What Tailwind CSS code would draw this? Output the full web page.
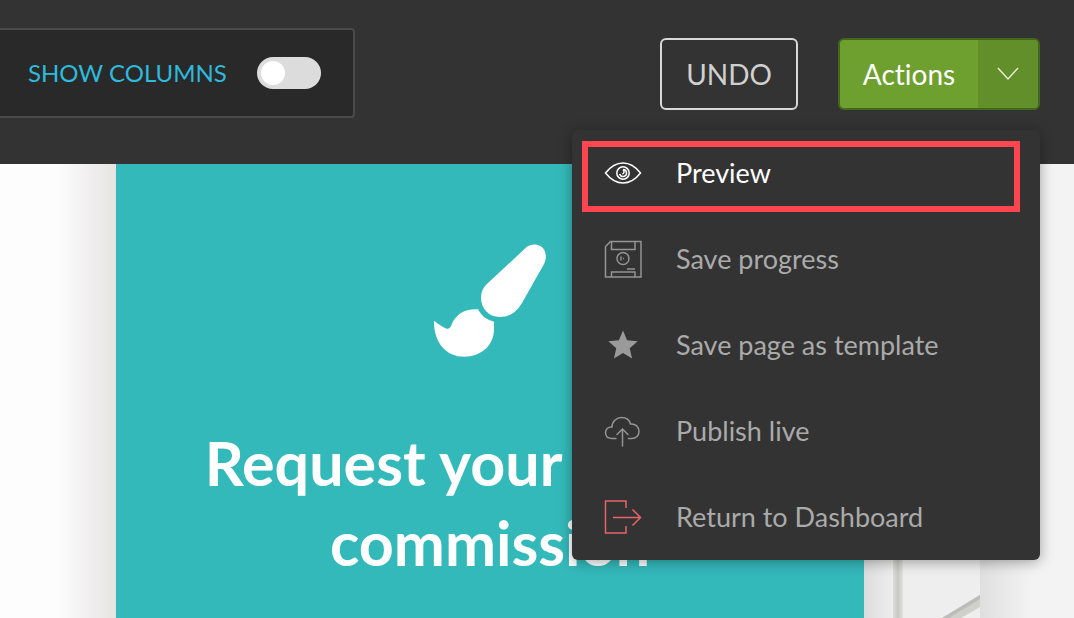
<!DOCTYPE html>
<html lang="en">
<head>
  <meta charset="UTF-8" />
  <meta name="viewport" content="width=device-width, initial-scale=1.0" />
  <title>Page Builder</title>
  <script src="https://cdn.jsdelivr.net/npm/@tailwindcss/browser@4"></script>
</head>
<body class="min-h-screen flex flex-col overflow-hidden bg-[#f3f3f3] font-['Lato','Open_Sans',sans-serif] [font-variant-ligatures:none]">

  <!-- Toolbar -->
  <header class="relative z-10 flex items-start justify-between h-[164px] shrink-0 bg-[#333333] pr-[34px]">
    <div class="mt-7 flex items-center gap-[30px] h-[90px] pl-7 pr-8 bg-[#292929] border-2 border-l-0 border-[#4a4a4a] rounded-r-sm">
      <label for="columns" class="text-2xl text-[#2fb9dc]">SHOW COLUMNS</label>
      <input id="columns" type="checkbox" class="appearance-none w-16 h-8 rounded-full bg-[#dcdcdc] before:block before:size-6 before:m-1 before:rounded-full before:bg-white" />
    </div>

    <div class="relative mt-[38px] flex gap-10">
      <button class="w-[138px] h-[72px] border-2 border-[#d8d8d8] rounded-md text-[28px] text-[#d0d0d0]">UNDO</button>

      <div class="flex w-[202px] h-[72px] border-2 border-[#43681b] rounded-md overflow-hidden bg-[#6ea030] text-white">
        <button class="flex-1 text-[28px]">Actions</button>
        <button aria-label="Open actions menu" aria-expanded="true" class="flex items-center justify-center w-[60px] bg-[#638f2b]">
          <svg width="22" height="14" viewBox="0 0 22 14" fill="none" stroke="#e4edda" stroke-width="1.5">
            <path d="M1 1l10 11L21 1" />
          </svg>
        </button>
      </div>

      <!-- Actions menu -->
      <nav class="absolute top-[92px] right-0 w-[468px] bg-[#333333] rounded-md shadow-[0_2px_14px_rgba(0,0,0,0.35)] text-[27px] text-[#aaaaaa]">
        <a href="#" class="flex items-center gap-[34px] h-[86px] pl-8 text-white">
          <svg width="38" height="38" viewBox="0 0 38 38" fill="none" stroke="currentColor" stroke-width="1.5">
            <path d="M1.500 19C7 12 13 9 19 9s12 3 17.500 10C31 26 25 29 19 29S7 26 1.500 19z" />
            <circle cx="19" cy="19" r="6.200" />
            <path d="M19 15.500a3.500 3.500 0 1 1-3.300 4.500M19 15.500c1.500 1.500 1.500 3.500-.5 4.500" />
          </svg>
          Preview
        </a>
        <a href="#" class="flex items-center gap-[34px] h-[86px] pl-8">
          <svg width="38" height="38" viewBox="0 0 38 38" fill="none" stroke="#949494" stroke-width="1.500">
            <path d="M6.500 1.500H37v35.500H1.500V6.500z" />
            <path d="M7.500 1.500v8H31v-8M7.500 37v-5H31v5M23 29h8" />
            <circle cx="19" cy="18.500" r="6" />
            <path d="M17 16.500v4M19 18.500h1" />
          </svg>
          Save progress
        </a>
        <a href="#" class="flex items-center gap-[34px] h-[86px] pl-8">
          <svg width="38" height="38" viewBox="0 0 38 38" fill="#9a9a9a">
            <path d="M19 4.500l4.100 9.800 10.600.9-8 7 2.400 10.300-9.100-5.500-9.100 5.500 2.400-10.300-8-7 10.600-.9z" />
          </svg>
          Save page as template
        </a>
        <a href="#" class="flex items-center gap-[34px] h-[86px] pl-8">
          <svg width="38" height="38" viewBox="0 0 38 38" fill="none" stroke="#949494" stroke-width="1.500" stroke-linecap="round">
            <path d="M12 26.500H8.500C4 26.500 1.500 24 1.500 20.500c0-3.500 3-6 6.500-5.500 0-5.500 4.500-9.500 9.500-9.500 4.500 0 8 2.500 9 6.500 5-.5 8.500 3 8.500 7.500 0 4-3 7-7 7h-3.500" />
            <path d="M18.500 34V17M13 22.500l5.500-5.500 5.500 5.500" />
          </svg>
          Publish live
        </a>
        <a href="#" class="flex items-center gap-[34px] h-[86px] pl-8">
          <svg width="38" height="38" viewBox="0 0 38 38" fill="none" stroke="#e8646a" stroke-width="1.500">
            <path d="M22 10V3H1.500v32H22v-7" />
            <path d="M9 19.500h27.500M28.500 11.500l8 8-8 8" />
          </svg>
          Return to Dashboard
        </a>
        <!-- Highlight around the current entry -->
        <div class="absolute top-[11px] left-[10px] right-5 h-[71px] border-6 border-[#ff4650] pointer-events-none"></div>
      </nav>
    </div>
  </header>

  <!-- Page canvas -->
  <main class="flex flex-1">
    <div class="w-[116px] bg-linear-to-r from-[#fdfdfd] from-50% to-[#e6e3e3]"></div>

    <section class="flex-1 flex flex-col items-center pt-20 bg-[#34b9ba] text-white">
      <svg width="112" height="113" viewBox="105 71 336 337" fill="currentColor">
        <path d="M382 80c18-15 46-10 55 10 6 14 4 30-4 44l-64 113c-14 24-35 42-67 42-33 0-56-26-56-57 0-17 6-31 17-41z" />
        <path d="M105 300c13 10 25 18 38 24 7 1 11-2 14-10 12-33 40-50 80-48 10 19 25 32 48 37v22c0 50-39 83-89 83-56 0-92-44-91-108z" />
      </svg>
      <h1 class="mt-[66px] w-[600px] text-center font-bold text-[61px] leading-[80px]">Request your custom commission</h1>
    </section>

    <!-- Background photo -->
    <div class="w-[116px] bg-[#eeeeee]">
      <svg class="w-full h-full" viewBox="0 0 116 454" preserveAspectRatio="none">
        <defs>
          <linearGradient id="edge"><stop stop-color="#dcdcdc" /><stop offset="1" stop-color="#eeeeee" /></linearGradient>
          <linearGradient id="bar"><stop stop-color="#dcdcdb" /><stop offset="0.500" stop-color="#c8c9c6" /><stop offset="1" stop-color="#e2e2e0" /></linearGradient>
        </defs>
        <rect width="30" height="454" fill="url(#edge)" />
        <rect x="29" width="10" height="454" fill="url(#bar)" />
        <path d="M78 454l38-23v12l-19 11z" fill="#cfcfcb" />
        <path d="M78 454l38-23v4l-31 19z" fill="#bdbdb8" />
      </svg>
    </div>
    <div class="w-[94px] bg-linear-to-r from-[#dfdfdf] to-[#f3f3f3] to-55%"></div>
  </main>

</body>
</html>
